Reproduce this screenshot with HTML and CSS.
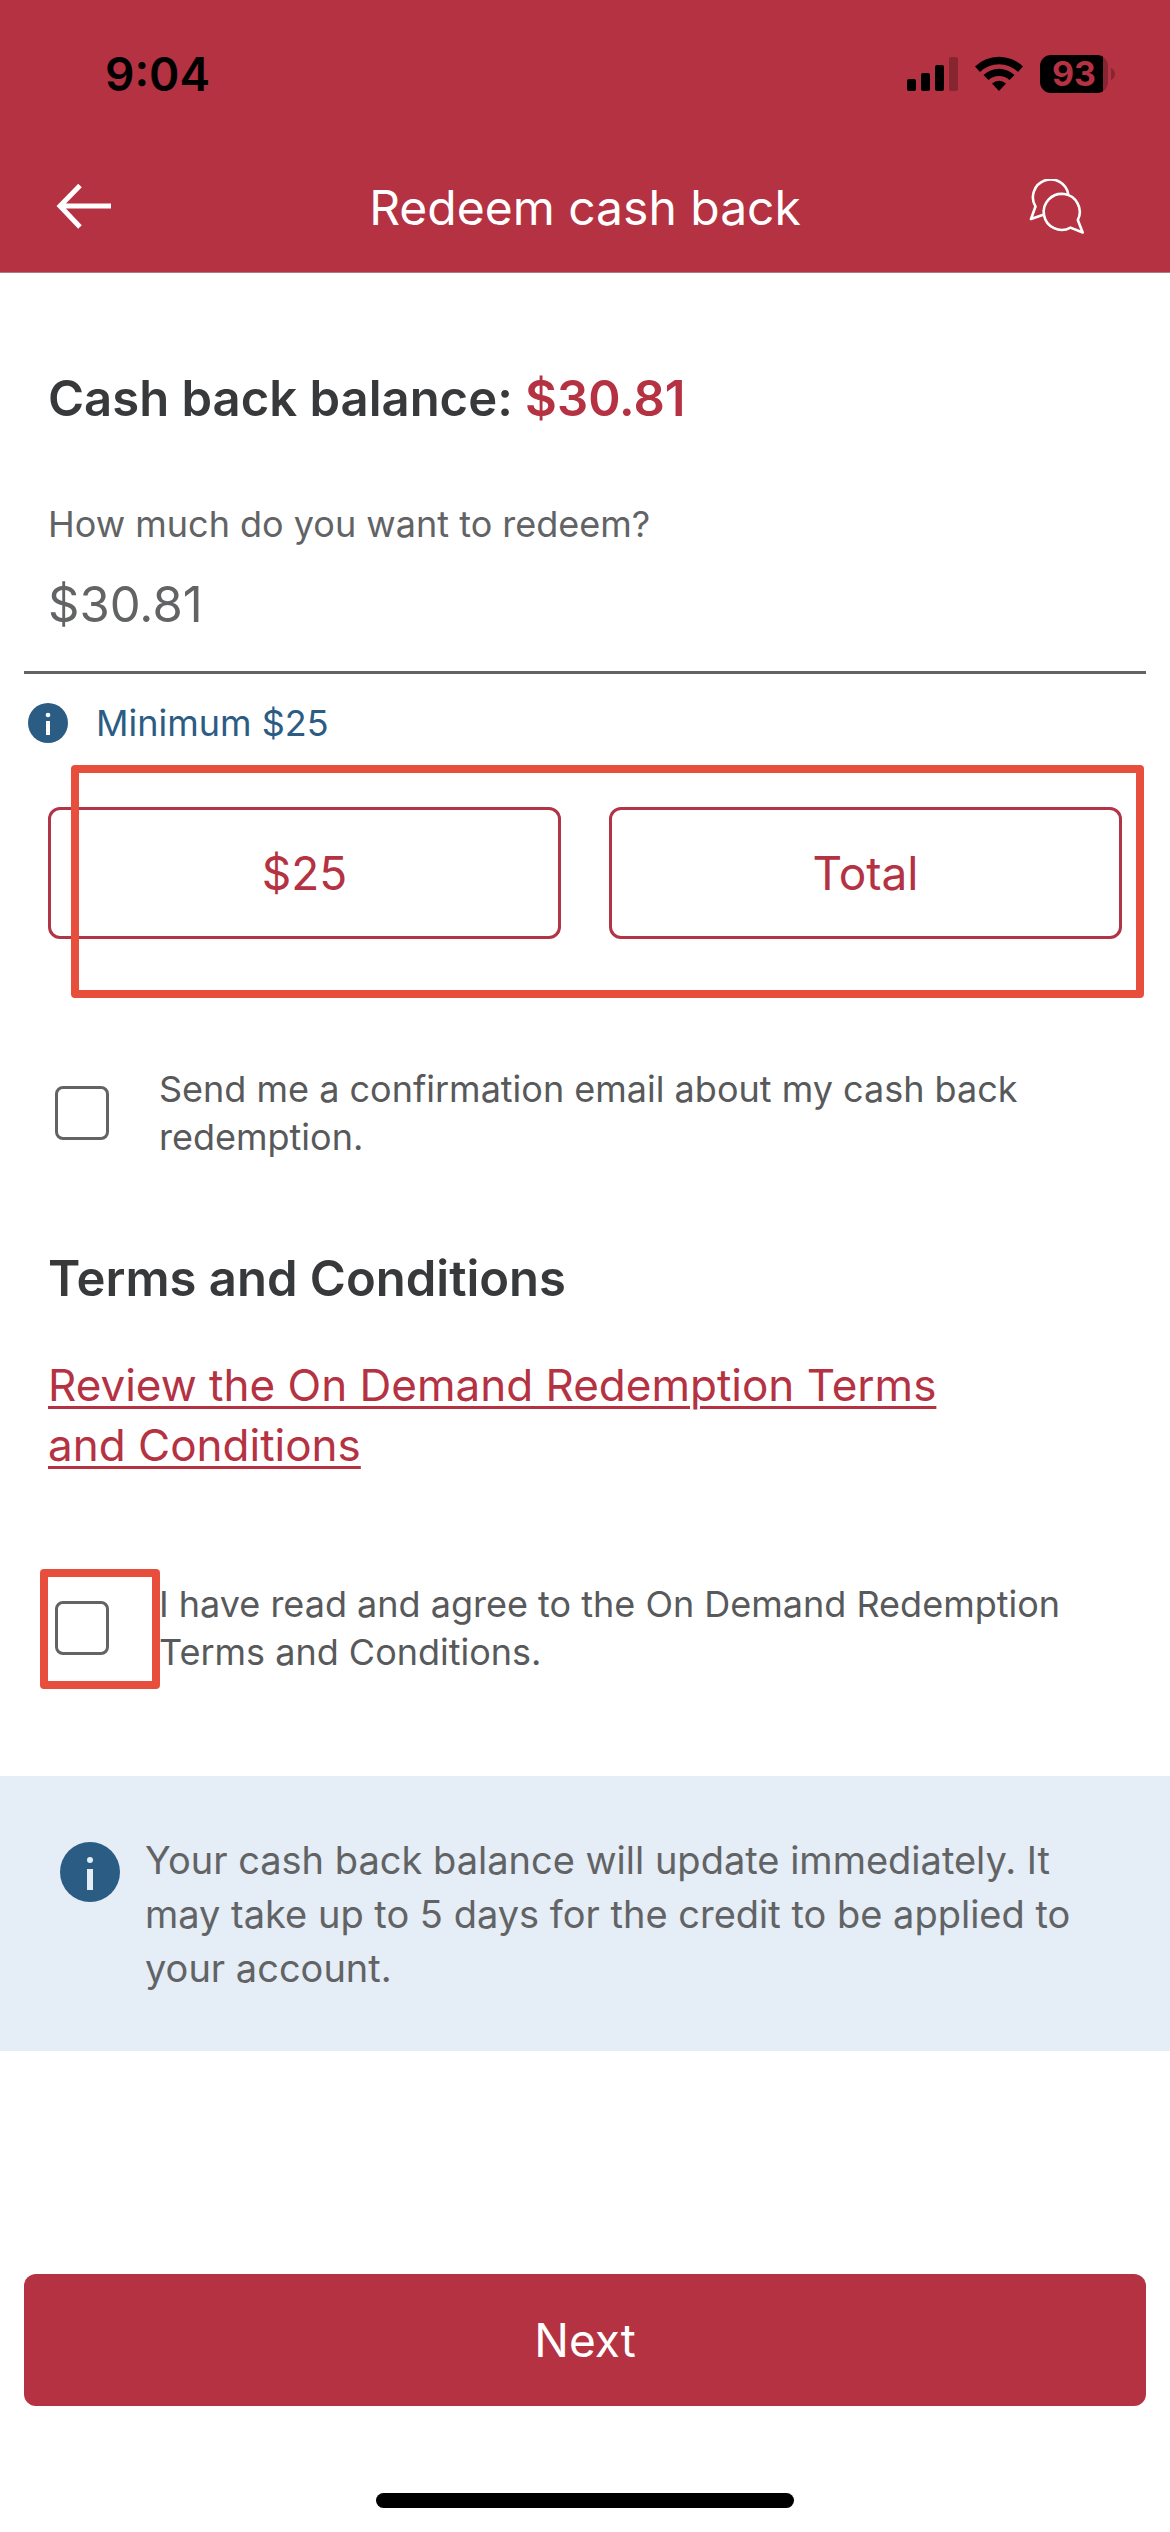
FILE: index.html
```html
<!DOCTYPE html>
<html lang="en">
<head>
  <meta charset="utf-8">
  <meta name="viewport" content="width=device-width, initial-scale=1">
  <title>Redeem cash back</title>
  <link rel="stylesheet" href="styles.css">
</head>
<body>
  <header class="header">
    <div class="status">
      <span class="status-time">9:04</span>
      <div class="status-icons">
        <svg width="51" height="38" viewBox="0 0 51 38" aria-hidden="true">
          <rect x="0" y="24" width="9" height="12" rx="2"/>
          <rect x="14" y="18" width="9" height="18" rx="2"/>
          <rect x="28" y="10" width="9" height="26" rx="2"/>
          <rect x="42" y="2" width="9" height="34" rx="2" opacity=".25"/>
        </svg>
        <svg width="50" height="38" viewBox="0 0 50 38" aria-hidden="true">
          <path d="M1 11.500A34.500 34.500 0 0 1 49 11.500L44 17A27 27 0 0 0 6 17Z"/>
          <path d="M9.500 20A22.500 22.500 0 0 1 40.500 20L35.500 25A15.500 15.500 0 0 0 14.500 25Z"/>
          <path d="M18 28.500A10.500 10.500 0 0 1 32 28.500L25 36Z"/>
        </svg>
        <div class="battery">
          <span class="battery-level">93</span>
          <svg class="battery-tip" width="4" height="12" viewBox="0 0 4 12" aria-hidden="true"><path d="M0 0Q4 2 4 6T0 12Z"/></svg>
        </div>
      </div>
    </div>
    <nav class="nav">
      <button class="icon-button" type="button" aria-label="Back">
        <svg width="56" height="48" viewBox="0 0 56 48" fill="none" stroke="#fff" stroke-width="5" aria-hidden="true">
          <path d="M55 22H4M24 1.500L4 22L24 43"/>
        </svg>
      </button>
      <h1 class="nav-title">Redeem cash back</h1>
      <button class="icon-button icon-button-end" type="button" aria-label="Chat">
        <svg width="58" height="58" viewBox="27 19 58 58" fill="none" stroke="#fff" stroke-width="2.600" stroke-linejoin="round" aria-hidden="true">
          <path d="M67.300 34.500A17.800 17.800 0 1 0 34.500 46.500L30 59L43 54.500"/>
          <path d="M76.800 60A18 18 0 1 0 69.500 67.600L81.700 72.500Z"/>
        </svg>
      </button>
    </nav>
  </header>

  <main class="content">
    <h2 class="heading balance">Cash back balance: <span class="amount">$30.81</span></h2>

    <div class="field">
      <label class="field-label" for="amount">How much do you want to redeem?</label>
      <input class="field-input" id="amount" type="text" value="$30.81">
      <p class="hint">
        <svg width="40" height="40" viewBox="0 0 60 60" aria-hidden="true">
          <circle cx="30" cy="30" r="30" fill="#2b5c84"/>
          <circle cx="30" cy="18" r="3.500" fill="#fff"/>
          <rect x="27" y="27" width="6" height="21" fill="#fff"/>
        </svg>
        <span>Minimum $25</span>
      </p>
    </div>

    <div class="choices">
      <button class="choice" type="button">$25</button>
      <button class="choice" type="button">Total</button>
      <div class="mark mark-choices"></div>
    </div>

    <div class="check">
      <input class="check-box" id="email" type="checkbox">
      <label for="email">Send me a confirmation email about my cash back redemption.</label>
    </div>

    <h2 class="heading terms">Terms and Conditions</h2>
    <a class="terms-link" href="#terms">Review the On Demand Redemption Terms and Conditions</a>

    <div class="check check-agree">
      <input class="check-box" id="agree" type="checkbox">
      <label for="agree">I have read and agree to the On Demand Redemption Terms and Conditions.</label>
      <div class="mark mark-agree"></div>
    </div>

    <aside class="notice">
      <svg class="notice-icon" width="60" height="60" viewBox="0 0 60 60" aria-hidden="true">
        <circle cx="30" cy="30" r="30" fill="#2b5c84"/>
        <circle cx="30" cy="18" r="3" fill="#e5edf6"/>
        <rect x="27" y="27" width="6" height="21" fill="#e5edf6"/>
      </svg>
      <p class="notice-text">Your cash back balance will update immediately. It may take up to 5 days for the credit to be applied to your account.</p>
    </aside>
  </main>

  <footer class="footer">
    <button class="next" type="button">Next</button>
    <div class="home-indicator"></div>
  </footer>
</body>
</html>
```

FILE: styles.css
```css
* {
  box-sizing: border-box;
}

body {
  display: flex;
  flex-direction: column;
  min-height: 100vh;
  margin: 0;
  background: #fff;
  color: #58595b;
  font-family: Inter, "Liberation Sans", sans-serif;
  font-size: 36px;
  line-height: 48px;
}

h1, h2, p {
  margin: 0;
}

button, input {
  font-family: inherit;
}

.header {
  padding-bottom: 4px;
  border-bottom: 1px solid #b0787f;
  background: #b43242;
}

.status {
  display: flex;
  align-items: center;
  justify-content: space-between;
  height: 148px;
  padding: 0 55px 0 105px;
  color: #000;
}

.status-time {
  font-size: 46px;
  font-weight: 600;
}

.status-icons {
  display: flex;
  align-items: center;
  gap: 16px;
}

.battery {
  display: flex;
  align-items: center;
  gap: 3px;
}

.battery-level {
  width: 68px;
  border-radius: 11px;
  background: linear-gradient(90deg, #000 63px, #872632 63px);
  color: #b43242;
  font-size: 34px;
  font-weight: 700;
  line-height: 38px;
  text-align: center;
}

.battery-tip {
  fill: #872632;
}

.nav {
  display: grid;
  grid-template-columns: 1fr auto 1fr;
  align-items: center;
  height: 120px;
  padding: 0 56px;
}

.nav-title {
  color: #fff;
  font-size: 48px;
  font-weight: 400;
  line-height: 60px;
}

.icon-button {
  display: flex;
  padding: 0;
  border: 0;
  background: none;
}

.icon-button-end {
  justify-self: end;
  margin-right: 28px;
}

.content {
  padding-top: 96px;
}

.heading {
  margin: 0 48px;
  color: #38393b;
  font-size: 49px;
  font-weight: 600;
  line-height: 60px;
}

.amount {
  color: #b43242;
}

.field {
  display: flex;
  flex-direction: column;
  margin: 71px 24px 0;
}

.field-label {
  padding: 0 24px;
  color: #626365;
}

.field-input {
  height: 126px;
  padding: 26px 24px 37px;
  border: 0;
  border-bottom: 3px solid #626365;
  border-radius: 0;
  background: none;
  color: #626365;
  font-size: 49px;
}

.hint {
  display: flex;
  align-items: center;
  gap: 28px;
  margin-top: 25px;
  padding-left: 4px;
  color: #2b5c84;
}

.choices {
  position: relative;
  display: grid;
  grid-template-columns: 1fr 1fr;
  gap: 48px;
  margin: 60px 48px 0;
}

.choice,
.next {
  height: 132px;
  border-radius: 12px;
  font-size: 46px;
}

.choice {
  border: 3px solid #b03547;
  background: #fff;
  color: #b43242;
}

.mark {
  position: absolute;
  border: 8px solid #e74e3c;
  border-radius: 4px;
  pointer-events: none;
}

.mark-choices {
  inset: -42px -22px -59px 23px;
}

.mark-agree {
  top: -11px;
  left: -15px;
  width: 120px;
  height: 120px;
}

.check {
  position: relative;
  display: flex;
  align-items: center;
  gap: 50px;
  margin: 126px 48px 0 55px;
}

.check-agree {
  margin-top: 105px;
}

.check-box {
  flex: none;
  width: 54px;
  height: 54px;
  margin: 0;
  border: 3px solid #626365;
  border-radius: 8px;
  appearance: none;
}

.terms {
  margin-top: 88px;
}

.terms-link {
  display: block;
  margin: 46px 192px 0 48px;
  color: #b43242;
  font-size: 44px;
  line-height: 60px;
  text-decoration-thickness: 3px;
  text-underline-offset: 5px;
}

.notice {
  display: flex;
  align-items: flex-start;
  gap: 25px;
  margin-top: 100px;
  padding: 57px 60px 56px;
  background: #e5edf6;
}

.notice-icon {
  flex: none;
  margin-top: 9px;
}

.notice-text {
  color: #626365;
  font-size: 38px;
  line-height: 54px;
}

.footer {
  display: flex;
  flex-direction: column;
  margin-top: auto;
  padding: 48px 24px 24px;
}

.next {
  border: 0;
  background: #b43242;
  color: #fff;
}

.home-indicator {
  align-self: center;
  width: 418px;
  height: 15px;
  margin-top: 87px;
  border-radius: 8px;
  background: #000;
}
```
